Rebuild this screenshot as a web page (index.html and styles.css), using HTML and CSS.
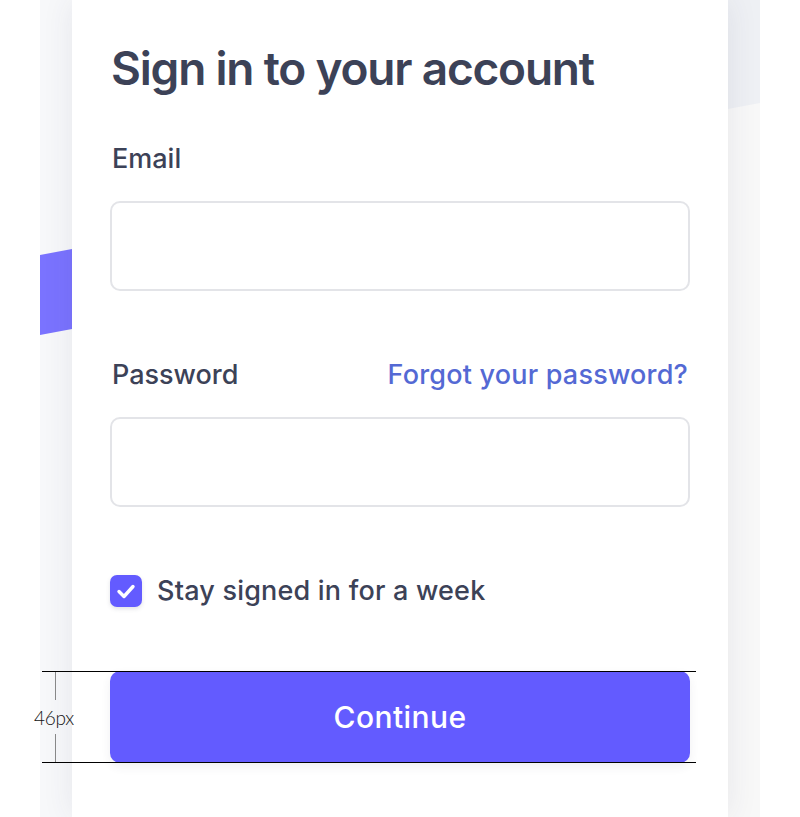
FILE: index.html
```html
<!DOCTYPE html>
<html lang="en">
<head>
    <meta charset="UTF-8">
    <meta name="viewport" content="width=device-width, initial-scale=1.0">
    <title>Sign in to your account</title>
    <link rel="stylesheet" href="styles.css">
</head>
<body>
    <div class="stage">
        <!-- left strip with the purple band -->
        <div class="strip strip-left">
            <div class="band band-purple"></div>
        </div>

        <div class="card">
            <h1>Sign in to your account</h1>
            <form class="login-form" onsubmit="return false">
                <div class="field">
                    <div class="field-head">
                        <label for="email">Email</label>
                    </div>
                    <input type="email" id="email" name="email">
                </div>

                <div class="field">
                    <div class="field-head">
                        <label for="password">Password</label>
                        <a href="#" class="forgot">Forgot your password?</a>
                    </div>
                    <input type="password" id="password" name="password">
                </div>

                <label class="remember">
                    <span class="checkbox">
                        <svg viewBox="0 0 32 32" width="32" height="32">
                            <path d="M9 16.5 L14 21.5 L23 11.5" fill="none" stroke="#fff" stroke-width="3.4" stroke-linecap="round" stroke-linejoin="round"/>
                        </svg>
                    </span>
                    Stay signed in for a week
                </label>

                <div class="submit-row">
                    <button type="submit">Continue</button>
                    <!-- measurement annotation -->
                    <div class="measure">
                        <span class="tick tick-top"></span>
                        <span class="measure-label">46px</span>
                        <span class="tick tick-bottom"></span>
                    </div>
                </div>
            </form>
        </div>

        <!-- right strip with the grey band -->
        <div class="strip strip-right">
            <div class="band band-grey"></div>
        </div>
    </div>
</body>
</html>
```

FILE: styles.css
```css
html, body {
    margin: 0;
    height: 100%;
    background-color: #fff;
    font-family: Inter, "Noto Sans", sans-serif;
    color: #3c4257;
    overflow: hidden;
}
.stage {
    display: flex;
    margin: 0 40px;
    height: 817px;
    background-color: #f7f8fa;
}
.strip {
    width: 32px;
    flex-shrink: 0;
    overflow: hidden;
}
.band {
    transform: skewY(-10.6deg);
}
.band-purple {
    margin-top: 252px;
    height: 80px;
    background-color: #7a73ff;
}
.band-grey {
    margin-top: -30px;
    height: 136px;
    background-color: #eef0f4;
}
.strip-right {
    background-color: #f8f8f8;
}
.card {
    position: relative;
    z-index: 1;
    width: 656px;
    flex-shrink: 0;
    box-sizing: border-box;
    padding: 40px 38px 0;
    background-color: #fff;
    box-shadow: 0 0 30px rgba(50, 50, 93, 0.09);
}
h1 {
    margin: 0 0 0 1px;
    font-size: 46px;
    line-height: 56px;
    font-weight: 600;
    letter-spacing: -1.2px;
}
.login-form {
    margin-top: 47px;
}
.field {
    margin-bottom: 68px;
}
.field-head {
    display: flex;
    justify-content: space-between;
    align-items: baseline;
    margin-bottom: 26px;
    padding: 0 2px 0 2px;
}
.field-head label,
.forgot {
    font-size: 27px;
    line-height: 32px;
    font-weight: 500;
}
.forgot {
    color: #5469d4;
    text-decoration: none;
    letter-spacing: 0.2px;
}
input[type="email"],
input[type="password"] {
    display: block;
    width: 100%;
    height: 90px;
    box-sizing: border-box;
    border: 2px solid #e3e4e8;
    border-radius: 10px;
    padding: 0 20px;
    font-size: 24px;
    font-family: inherit;
    outline: none;
}
.remember {
    display: flex;
    align-items: center;
    gap: 15px;
    font-size: 27px;
    line-height: 32px;
    font-weight: 500;
    letter-spacing: 0.2px;
}
.checkbox {
    display: flex;
    width: 32px;
    height: 32px;
    border-radius: 7px;
    background-color: #635bff;
    box-shadow: 0 2px 4px rgba(60, 66, 87, 0.15);
}
.submit-row {
    position: relative;
    margin-top: 64px;
}
button {
    display: block;
    width: 100%;
    height: 92px;
    border: none;
    border-radius: 10px;
    background-color: #635bff;
    color: #fff;
    font-family: inherit;
    font-size: 30px;
    font-weight: 500;
    letter-spacing: 0.4px;
    cursor: pointer;
    box-shadow: 0 4px 10px rgba(60, 66, 87, 0.08);
}
.measure {
    position: absolute;
    top: 0;
    left: -68px;
    right: -6px;
    height: 92px;
    box-sizing: border-box;
    border-top: 1px solid #000;
    border-bottom: 1px solid #000;
    display: flex;
    flex-direction: column;
    align-items: flex-start;
    padding-left: 13px;
    pointer-events: none;
}
.tick {
    width: 1px;
    height: 28px;
    background-color: #888;
}
.tick-bottom {
    margin-top: auto;
}
.measure-label {
    position: absolute;
    left: -14px;
    top: 34px;
    width: 52px;
    text-align: center;
    font-family: Lato, sans-serif;
    font-size: 19px;
    font-weight: 300;
    color: #111;
    letter-spacing: -0.3px;
}
```
